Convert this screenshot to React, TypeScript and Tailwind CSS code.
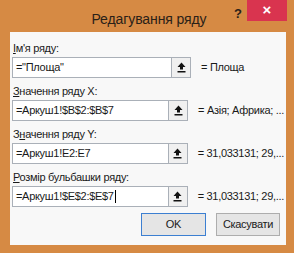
import React from "react";

const rows = [
  { label: "Ім'я ряду:", key: "І", rest: "м'я ряду:", value: '="Площа"', result: "= Площа" },
  { label: "Значення ряду X:", key: "З", rest: "начення ряду X:", value: "=Аркуш1!$B$2:$B$7", result: "= Азія; Африка; ..." },
  { label: "Значення ряду Y:", key: "н", pre: "З", rest: "ачення ряду Y:", value: "=Аркуш1!E2:E7", result: "= 31,033131; 29,..." },
  { label: "Розмір бульбашки ряду:", key: "Р", rest: "озмір бульбашки ряду:", value: "=Аркуш1!$E$2:$E$7", result: "= 31,033131; 29,...", caret: true },
];

const UploadIcon = () => (
  <svg width="9" height="11" viewBox="0 0 9 11">
    <path d="M4.5 0.5 L8.5 5 L6 5 L6 7.5 L3 7.5 L3 5 L0.5 5 Z" fill="#111" />
    <rect x="0.5" y="9" width="8" height="1.5" fill="#111" />
  </svg>
);

export default function App() {
  return (
    <div
      className="w-[294px] h-[253px] bg-[#d68a44] flex flex-col text-[#1a1a1a]"
      style={{ fontFamily: '"Liberation Sans", Arial, sans-serif' }}
    >
      <div className="h-[32px] flex items-start relative">
        <div className="flex-1 text-center text-[14px] pt-[9px] pl-[4px] tracking-[-0.1px] text-[#2a2118]">
          Редагування ряду
        </div>
        <div className="absolute left-[234px] top-[4px] text-[13px] font-bold text-[#2a2118]">?</div>
        <div className="absolute left-[247px] top-0 w-[40px] h-[21px] bg-[#d9344f] flex items-center justify-center text-white text-[15px] font-bold">
          ×
        </div>
      </div>
      <div className="ml-[10px] mr-[8px] h-[213px] bg-[#f8f8f8] px-[2px] pt-[9px] text-[11px] tracking-[-0.3px]">
        {rows.map((r, i) => (
          <div key={i} className={i === 0 ? "" : "mt-[6px]"}>
            <div className="h-[15px] leading-[15px] pl-[1px]">
              {r.pre}
              <span className="underline underline-offset-1">{r.key}</span>
              {r.rest}
            </div>
            <div className="mt-[1px] flex items-center">
              <div className="w-[160px] h-[21px] border border-[#aab0b8] bg-white flex items-center pl-[3px]">
                {r.value}
                {r.caret && <span className="inline-block w-px h-[13px] bg-black ml-[1px]" />}
              </div>
              <div className="w-[19px] h-[21px] border border-l-0 border-[#aab0b8] bg-[#f0f0f0] flex items-center justify-center">
                <UploadIcon />
              </div>
              <div className="ml-[10px] whitespace-nowrap">{r.result}</div>
            </div>
          </div>
        ))}
        <div className="mt-[6px] flex justify-end pr-[4px] gap-[10px]">
          <div className="w-[65px] h-[23px] border border-[#3c7fd1] bg-[#e5e5e5] flex items-center justify-center">
            OK
          </div>
          <div className="w-[64px] h-[23px] border border-[#adadad] bg-[#e5e5e5] flex items-center justify-center">
            Скасувати
          </div>
        </div>
      </div>
    </div>
  );
}
